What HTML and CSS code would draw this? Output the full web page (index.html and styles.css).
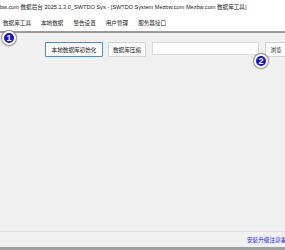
FILE: index.html
```html
<!DOCTYPE html>
<html lang="zh-cn">
<head>
    <meta charset="UTF-8">
    <meta name="viewport" content="width=device-width, initial-scale=1.0">
    <title>数据库工具</title>
    <link rel="stylesheet" href="styles.css">
</head>
<body>
    <div class="window">
        <div class="title-bar">bw.com 数据后台 2025.1.3.0_SWTDO Sys - [SWTDO System Mezbw.com Mezbw.com 数据库工具]</div>

        <div class="menu-bar">
            <span class="menu-item">数据库工具</span>
            <span class="menu-item">本地数据</span>
            <span class="menu-item">警告设置</span>
            <span class="menu-item">用户管理</span>
            <span class="menu-item">服务器接口</span>
        </div>

        <div class="content">
            <span class="badge badge-one">1</span>
            <div class="toolbar">
                <button class="btn btn-init">本地数据库初始化</button>
                <button class="btn btn-compress">数据库压缩</button>
                <input class="path-box" type="text">
                <button class="btn btn-browse">浏览</button>
            </div>
            <span class="badge badge-two">2</span>
        </div>

        <div class="status-bar">
            <a class="status-link">安装升级注意事项</a>
        </div>
    </div>
</body>
</html>
```

FILE: styles.css
```css
html, body {
    margin: 0;
    padding: 0;
    overflow: hidden;
}
body {
    font-family: "Liberation Sans", "Noto Sans CJK SC", sans-serif;
    font-size: 5.6px;
    color: #222;
    background-color: #f0f0f0;
}
.window {
    width: 285px;
    height: 250px;
    display: flex;
    flex-direction: column;
}
.title-bar {
    height: 15px;
    line-height: 14px;
    background-color: #fff;
    white-space: nowrap;
    overflow: hidden;
}
.menu-bar {
    height: 16px;
    display: flex;
    align-items: center;
    background-color: #fff;
    padding-left: 3px;
    gap: 10px;
    border-bottom: 2px solid #9a9a9a;
}
.menu-item {
    white-space: nowrap;
}
.content {
    flex: 1;
    position: relative;
    border-bottom: 1px solid #dedede;
}
.toolbar {
    display: flex;
    align-items: flex-start;
    padding: 9px 0 0 45px;
}
.btn {
    height: 15px;
    padding: 0;
    font-family: inherit;
    font-size: 5.6px;
    color: #222;
    background-color: #fdfdfd;
    border: 1px solid #d4d4d4;
    border-radius: 1px;
    white-space: nowrap;
    flex-shrink: 0;
}
.btn-init {
    width: 58px;
    border-color: #3c8fe0;
}
.btn-compress {
    width: 38px;
    margin-left: 5px;
}
.path-box {
    width: 105px;
    height: 11px;
    padding: 0;
    margin-left: 6px;
    border: 1px solid #dadada;
    background-color: #fff;
    flex-shrink: 0;
}
.btn-browse {
    width: 22px;
    margin-left: 6px;
}
.badge {
    position: absolute;
    width: 10px;
    height: 10px;
    border-radius: 50%;
    background-color: #1010e8;
    border: 2px solid #fff;
    box-shadow: 0 0 1px 1px #888;
    color: #fff;
    font-family: "Liberation Sans", sans-serif;
    font-weight: bold;
    font-size: 9px;
    line-height: 10px;
    text-align: center;
}
.badge-one {
    left: 2px;
    top: -2px;
}
.badge-two {
    left: 254px;
    top: 21px;
}
.status-bar {
    height: 15px;
    display: flex;
    align-items: center;
    padding-left: 247px;
    border-bottom: 3px solid #a0a0a0;
    overflow: hidden;
}
.status-link {
    color: #1a1aff;
    white-space: nowrap;
    flex-shrink: 0;
}
```
